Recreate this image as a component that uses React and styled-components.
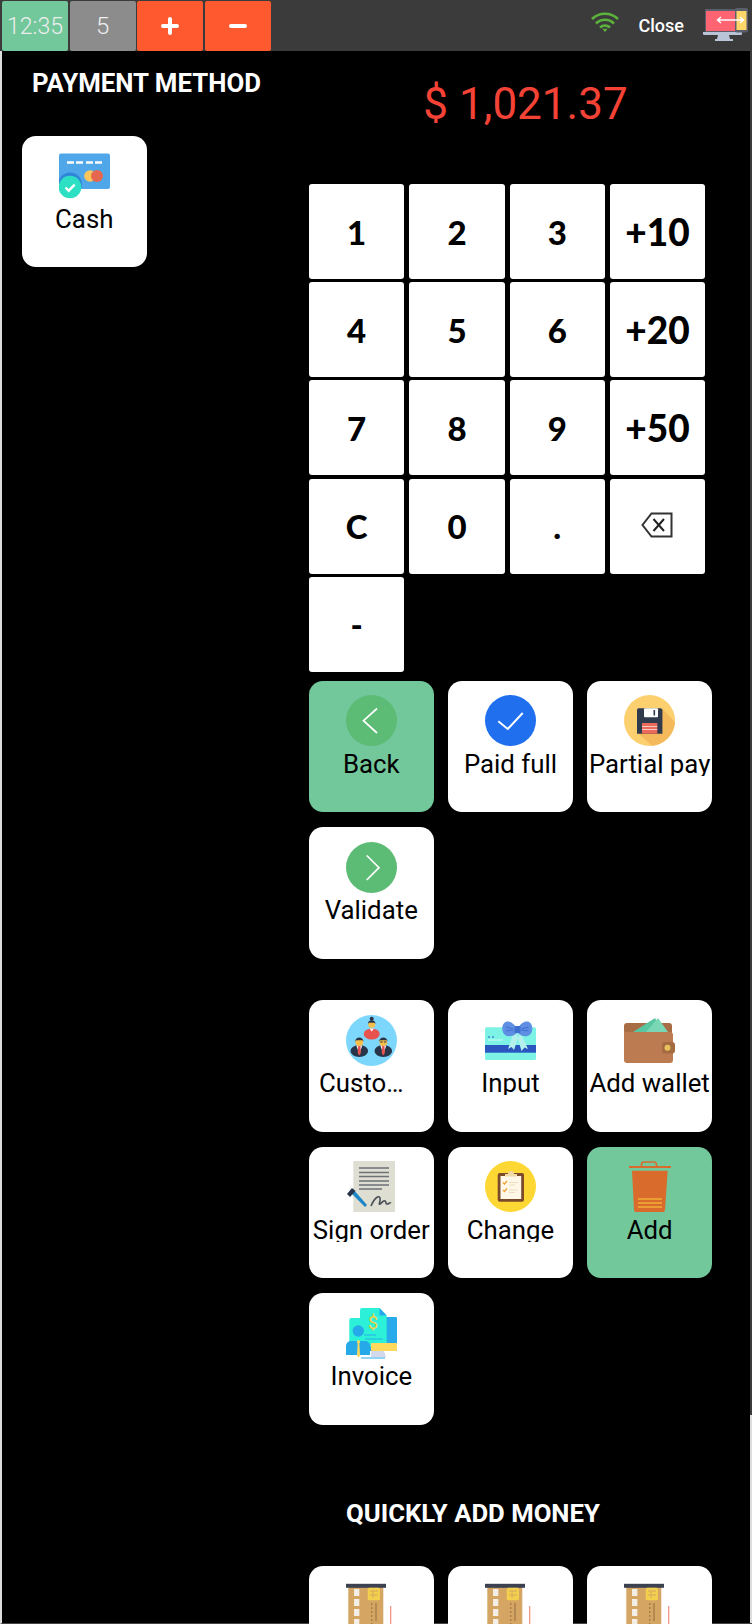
import styled, { createGlobalStyle } from "styled-components";

const GlobalStyle = createGlobalStyle`
  html, body {
    margin: 0;
    padding: 0;
    background: #000;
  }
  body {
    font-family: Roboto, "Liberation Sans", sans-serif;
    overflow: hidden;
  }
`;

const Page = styled.div`
  width: 752px;
  height: 1624px;
  display: flex;
  flex-direction: column;
  overflow: hidden;
  background: #000;
`;

const TopBar = styled.div`
  height: 51px;
  flex: none;
  box-sizing: border-box;
  padding: 1px 4px 0 2px;
  display: flex;
  align-items: stretch;
  gap: 1.7px;
  background: #3b3b3b;
`;

const BarButton = styled.div`
  width: 66px;
  display: flex;
  align-items: center;
  justify-content: center;
  border-radius: 2px;
  color: #eee;
  font-size: ${(p) => p.$size || 24}px;
  font-weight: 300;
  background: ${(p) => p.$bg};
`;

const BarRight = styled.div`
  margin-left: auto;
  display: flex;
  align-items: center;
`;

const CloseText = styled.span`
  margin: -2px 19px 0 20px;
  color: #fff;
  font-size: 18px;
  font-weight: 500;
`;

const Content = styled.div`
  flex: 1;
  min-height: 0;
  display: flex;
  border-left: 2px solid #ddd;
  border-bottom: 1px solid #444;
`;

const LeftColumn = styled.div`
  width: 307px;
  flex: none;
  box-sizing: border-box;
  padding: 17px 0 0 20px;
`;

const RightColumn = styled.div`
  flex: 1;
  min-width: 0;
  display: flex;
  flex-direction: column;
`;

const ScrollTrack = styled.div`
  width: 2px;
  flex: none;
  display: flex;
  flex-direction: column;
  background: #ddd;
`;

const ScrollThumb = styled.div`
  height: 1364px;
  background: #3b3b3b;
`;

const Title = styled.h2`
  margin: 0 0 37.5px 10px;
  color: #fff;
  font-size: 25.8px;
  line-height: 30px;
  font-weight: 700;
`;

const Amount = styled.div`
  height: 133px;
  flex: none;
  box-sizing: border-box;
  padding: 25px 8px 0 0;
  text-align: center;
  color: #f44336;
  font-size: 44px;
  line-height: 56px;
`;

const Keypad = styled.div`
  display: grid;
  grid-template-columns: repeat(4, 95.3px);
  grid-auto-rows: 95px;
  column-gap: 5px;
  row-gap: 3.2px;
`;

const Key = styled.div`
  display: flex;
  align-items: center;
  justify-content: center;
  border-radius: 3px;
  background: #fff;
  color: #000;
  font-family: Lato, "Liberation Sans", sans-serif;
  font-size: ${(p) => (p.$wide ? 37 : 33)}px;
  font-weight: 900;
`;

const CardGrid = styled.div`
  margin-top: ${(p) => p.$top}px;
  display: grid;
  grid-template-columns: repeat(3, 124.5px);
  grid-auto-rows: 131.5px;
  column-gap: 14.7px;
  row-gap: 15px;
`;

const Card = styled.div`
  box-sizing: border-box;
  padding-top: 14.5px;
  display: flex;
  flex-direction: column;
  align-items: center;
  border-radius: 14px;
  overflow: hidden;
  background: ${(p) => (p.$active ? "#72c79b" : "#fff")};
`;

const CashCard = styled(Card)`
  width: 124.5px;
  height: 131.5px;
`;

const CardIcon = styled.svg`
  width: 51px;
  height: 51px;
  flex: none;
  display: block;
`;

const CardLabel = styled.div`
  width: 100%;
  height: 26px;
  margin-top: 3.5px;
  color: #000;
  font-size: 25.8px;
  line-height: 28px;
  text-align: center;
  white-space: nowrap;
  overflow: hidden;
`;

const TruncatedLabel = styled(CardLabel)`
  width: 98px;
  align-self: flex-start;
  margin-left: 10px;
  text-align: left;
  text-overflow: ellipsis;
`;

const QuickTitle = styled(Title)`
  margin: 73.5px 0 38px;
  padding-left: 37px;
  font-size: 25.7px;
  line-height: 30px;
`;

const Circle = ({ fill }) => <circle cx="25.5" cy="25.5" r="25.5" fill={fill} />;

const CashIcon = () => (
  <CardIcon viewBox="0 0 51 51">
    <rect x="0" y="3.5" width="51" height="35.5" rx="2" fill="#4fa6e8" />
    <path d="M8 12.5h7M17 12.5h7M27 12.5h7M36 12.5h7" stroke="#fff" strokeWidth="2.6" />
    <circle cx="31" cy="26" r="5.8" fill="#fbc75d" />
    <circle cx="38" cy="26" r="6" fill="#e5674f" />
    <circle cx="11" cy="34.5" r="12" fill="#2f86d8" />
    <circle cx="11" cy="37" r="11.3" fill="#2ddfc3" />
    <path d="M6.5 37.5l3.2 3.2 6-6" fill="none" stroke="#fff" strokeWidth="2.4" />
  </CardIcon>
);

const BackIcon = () => (
  <CardIcon viewBox="0 0 51 51">
    <Circle fill="#5cbb74" />
    <path d="M31 13.5L17.5 25.7 31 38" fill="none" stroke="#fff" strokeWidth="1.7" />
  </CardIcon>
);

const PaidIcon = () => (
  <CardIcon viewBox="0 0 51 51">
    <Circle fill="#1f6fee" />
    <path d="M13.3 26.3l9.4 7.7 15-16" fill="none" stroke="#fff" strokeWidth="2" />
  </CardIcon>
);

const SaveIcon = () => (
  <CardIcon viewBox="0 0 51 51">
    <Circle fill="#fccf6f" />
    <path d="M38 13.5L49 25 51 28A25.5 25.5 0 0 1 28 50.8L13.5 37.5z" fill="#f4b95a" />
    <path d="M14 13.3h23l1.4 1.4v24h-25.4v-24z" fill="#2f3b4d" />
    <rect x="20" y="13.3" width="14" height="9" rx="1" fill="#fff" />
    <rect x="29.5" y="15" width="1.6" height="5.5" fill="#2f3b4d" />
    <rect x="18" y="28" width="15.3" height="10.7" fill="#ea6a5b" />
    <path d="M18 31.5h15.3M18 34.5h15.3" stroke="#f8c9c0" strokeWidth="1" />
  </CardIcon>
);

const ValidateIcon = () => (
  <CardIcon viewBox="0 0 51 51">
    <Circle fill="#5cbb74" />
    <path d="M20.7 13.5L33 25.7 20.7 38" fill="none" stroke="#fff" strokeWidth="1.7" />
  </CardIcon>
);

const Person = ({ cx, glasses }) => (
  <g>
    <ellipse cx={cx} cy="36" rx="8.8" ry="6" fill="#27344a" />
    <path d={`M${cx - 3} 30.5h6L${cx} 39z`} fill="#f4f4f4" />
    <path d={`M${cx - 1.1} 31h2.2l.5 7-1.6 2.5-1.6-2.5z`} fill="#e9534f" />
    <circle cx={cx} cy="27" r="3.9" fill="#f8c04a" />
    <path d={`M${cx - 4.2} 26.8a4.2 4.2 0 0 1 8.4 0l-1 -1.6h-6.4z`} fill="#27344a" />
    {glasses && (
      <path d={`M${cx - 3} 27h2.4M${cx + 0.6} 27h2.4`} stroke="#27344a" strokeWidth="1.2" />
    )}
  </g>
);

const CustomerIcon = () => (
  <CardIcon viewBox="0 0 51 51">
    <Circle fill="#7dd6fb" />
    <ellipse cx="25.7" cy="19" rx="8" ry="5.5" fill="#e9534f" />
    <path d="M23.5 13.5h4.4l-2.2 3z" fill="#fff" />
    <circle cx="25.7" cy="9.2" r="3.5" fill="#f8c04a" />
    <path d="M22 9a3.7 3.7 0 0 1 7.4 0l-1-1.2h-5.4z" fill="#27344a" />
    <circle cx="25.7" cy="3.8" r="2" fill="#27344a" />
    <Person cx={13.3} />
    <Person cx={37.3} glasses />
  </CardIcon>
);

const GiftIcon = () => (
  <CardIcon viewBox="0 0 51 51">
    <rect x="0" y="12.3" width="51" height="32.7" rx="1.5" fill="#7df3e6" />
    <rect x="0" y="30" width="51" height="7.7" fill="#2b56c0" />
    <path d="M3 22h2M7 22h2" stroke="#2b56c0" strokeWidth="1" />
    <path d="M3 25h15" stroke="#d8fbf7" strokeWidth="1" />
    <path d="M29 17L23 34l3.5-2 2.5 3 5-15zM35 17l8 17-3.500-1.500-3 3.500-5-17z" fill="#b4f0ec" />
    <path d="M32.3 14C26 3 17.3 5 17.3 13.5s8.7 10.5 15 4C39 24 47.3 22 47.3 13.5S38.5 3 32.3 14z" fill="#5f8fe3" />
    <rect x="29.5" y="11" width="6" height="7" rx="1" fill="#3f6fd1" />
    <path d="M21 12l7 2M21 16l7-1M43.500 12l-7 2M43.500 16l-7-1" stroke="#3f6fd1" strokeWidth="1" />
  </CardIcon>
);

const WalletIcon = () => (
  <CardIcon viewBox="0 0 51 51">
    <path d="M0 11a3 3 0 0 1 3-3h42a3 3 0 0 1 3 3v8H0z" fill="#a86d45" />
    <path d="M9 17L31 3l7 14z" fill="#58c6a0" />
    <path d="M22 17L34 3l10 14z" fill="#7ad7b5" />
    <path d="M0 15a2 2 0 0 0 2 2h44a3 3 0 0 1 3 3v25a3 3 0 0 1-3 3H3a3 3 0 0 1-3-3z" fill="#bd7b51" />
    <rect x="38" y="27" width="13" height="11.5" rx="3" fill="#a46a40" />
    <circle cx="43.5" cy="32.7" r="3" fill="#e8c25c" />
  </CardIcon>
);

const SignIcon = () => (
  <CardIcon viewBox="0 0 51 51">
    <rect x="7.3" y="0" width="41.7" height="51" fill="#dedfd2" />
    <path d="M13 7h30M13 11.5h30M13 15.5h30M13 20h30M13 24h30M13 28h23" stroke="#6d7278" strokeWidth="1.5" />
    <path d="M4 31l3-3 14 16-2 2z" fill="#1c86c9" />
    <path d="M1 33l5-6 3.500 3-5.500 6z" fill="#27344a" />
    <path d="M25 45c4-9 8-11 9-8s-2 7 0 6 3-4 5-3 0 3 2 3 3-2 4-1" fill="none" stroke="#4b5058" strokeWidth="1.6" />
  </CardIcon>
);

const ClipboardIcon = () => (
  <CardIcon viewBox="0 0 51 51">
    <Circle fill="#fdd835" />
    <rect x="12.7" y="12" width="26.3" height="28.7" rx="2" fill="#7a4a2a" />
    <rect x="15.5" y="15" width="20.7" height="23" fill="#fff8e8" />
    <path d="M20 15v-2h3a3 3 0 0 1 6 0h3v2.5H20z" fill="#f2d9a8" />
    <path d="M18 21.500l1.500 1.500 2.500-3M18 29l1.500 1.500 2.500-3" fill="none" stroke="#f0a030" strokeWidth="1.2" />
    <path d="M24 21.500h9M24 24h6M24 29h9M24 31.500h6" stroke="#ecdcc0" strokeWidth="1" />
  </CardIcon>
);

const TrashIcon = () => (
  <CardIcon viewBox="0 0 51 51">
    <path d="M5 6h42" stroke="#d96b2c" strokeWidth="1.8" />
    <path d="M17.500 5.500v-2a2.500 2.500 0 0 1 2.500-2.500h10a2.500 2.500 0 0 1 2.500 2.500v2" fill="none" stroke="#d96b2c" strokeWidth="1.6" />
    <path d="M8 9.700h35.700L41 49a2 2 0 0 1-2 2H12a2 2 0 0 1-2-2z" fill="#d96b2c" />
    <path d="M14 38h24M14 42h24M14 46h24" stroke="#f2b035" strokeWidth="1.4" />
  </CardIcon>
);

const InvoiceIcon = () => (
  <CardIcon viewBox="0 0 51 51">
    <rect x="21" y="9" width="30" height="34" rx="1" fill="#27aae9" />
    <path d="M14 10V2a2 2 0 0 1 2-2h17.500l7.200 7.500V38.700H3.300V12a2 2 0 0 1 2-2z" fill="#2cf0d8" />
    <path d="M33.500 0l7.200 7.500h-7.200z" fill="#27aae9" />
    <rect x="25" y="35" width="26" height="8" rx="1" fill="#ffd95c" />
    <path d="M25 43h13l2 6H25z" fill="#d3d9ea" />
    <path d="M15 50h24" stroke="#27aae9" strokeWidth="1.2" />
    <text x="27" y="21" fontSize="18" textAnchor="middle" fill="#f2d24a" fontFamily="Roboto, sans-serif">$</text>
    <path d="M18 27h12M19 31h18" stroke="#27aae9" strokeWidth="0.9" />
    <circle cx="12.300" cy="23" r="5.700" fill="#26a9e8" />
    <path d="M0 47V38a5 5 0 0 1 5-5h14a5 5 0 0 1 5 5v9z" fill="#26a9e8" />
    <path d="M11 32.500h3v2l-.7 1 .7 12-1.500 2-1.500-2 .7-12-.7-1z" fill="#ffd95c" />
  </CardIcon>
);

const AtmIcon = () => (
  <CardIcon viewBox="0 0 51 51">
    <rect x="2.300" y="5" width="35" height="46" fill="#d4a563" />
    <rect x="0" y="2.800" width="40" height="4" fill="#3b4150" />
    <path d="M10.700 8v7M10.700 18v7M10.700 28v7M10.700 38v7" stroke="#f3efe6" strokeWidth="5.300" />
    <rect x="21.700" y="6.800" width="12.300" height="12.500" rx="1.500" fill="#f3cf4e" />
    <path d="M24 10h8M27 10v7M24 14h3M27 14h5" stroke="#d4a563" strokeWidth="0.9" />
    <path d="M25.700 22v24" stroke="#a67f48" strokeWidth="1.400" strokeDasharray="2 2" />
    <path d="M30 22v18" stroke="#a67f48" strokeWidth="1.400" />
    <path d="M44.700 25v20M39 44.500l2 1M49 44.500l2 1" stroke="#f28b82" strokeWidth="1.200" />
  </CardIcon>
);

const WifiIcon = () => (
  <svg width="28" height="20" viewBox="0 0 28 20" style={{ display: "block", marginTop: "-8px" }}>
    <g fill="none" stroke="#5bb33c" strokeWidth="2.600">
      <path d="M1 7C8 0 20 0 27 7" />
      <path d="M5 11.500C10 6.500 18 6.500 23 11.500" />
      <path d="M9 15.500C12 13 16 13 19 15.500" />
    </g>
    <path d="M14 20l-2.600-3.200h5.200z" fill="#5bb33c" />
  </svg>
);

const ResponsiveIcon = () => (
  <svg width="45" height="34" viewBox="0 0 45 34" style={{ display: "block", marginTop: "-2px" }}>
    <rect x="2" y="1" width="33" height="24" fill="#5a5f6b" />
    <rect x="3" y="3" width="31" height="20" fill="#ff6473" />
    <path d="M0 24h39v2a1 1 0 0 1-1 1H1a1 1 0 0 1-1-1z" fill="#b9c4d8" />
    <path d="M15 27h11l1 4h3v2H12v-2h2z" fill="#b9c4d8" />
    <rect x="32" y="0" width="13" height="24.500" rx="2" fill="#5a5f6b" />
    <rect x="33.500" y="3" width="10" height="19" fill="#ffd768" />
    <path d="M15 12h25M18 9l-3.500 3 3.500 3M37 9l3.500 3-3.500 3" fill="none" stroke="#fff" strokeWidth="1.400" />
  </svg>
);

const BackspaceIcon = () => (
  <svg width="32" height="26" viewBox="0 0 32 26" style={{ display: "block", margin: "-2px 0 0 -1px" }}>
    <path d="M30.500 1.500H10.500L1.500 13l9 11.500h20z" fill="none" stroke="#333" strokeWidth="2" />
    <path d="M12.500 7l10.500 12M23 7L12.500 19" stroke="#222" strokeWidth="2" />
  </svg>
);

const PlusIcon = () => (
  <svg width="18" height="18" viewBox="0 0 18 18" style={{ display: "block" }}>
    <path d="M2 9h14M9 2v14" stroke="#fff" strokeWidth="4" strokeLinecap="round" />
  </svg>
);

const MinusIcon = () => (
  <svg width="18" height="18" viewBox="0 0 18 18" style={{ display: "block" }}>
    <path d="M2 9h14" stroke="#fff" strokeWidth="4" strokeLinecap="round" />
  </svg>
);

const keys = ["1", "2", "3", "+10", "4", "5", "6", "+20", "7", "8", "9", "+50", "C", "0", ".", "back", "-"];

const App = () => {
  return (
    <Page>
      <GlobalStyle />
      <TopBar>
        <BarButton $bg="#72c79b" $size={23}>12:35</BarButton>
        <BarButton $bg="#8c8c8c">5</BarButton>
        <BarButton $bg="#ff5a2f"><PlusIcon /></BarButton>
        <BarButton $bg="#ff5a2f"><MinusIcon /></BarButton>
        <BarRight>
          <WifiIcon />
          <CloseText>Close</CloseText>
          <ResponsiveIcon />
        </BarRight>
      </TopBar>
      <Content>
        <LeftColumn>
          <Title>PAYMENT METHOD</Title>
          <CashCard>
            <CashIcon />
            <CardLabel>Cash</CardLabel>
          </CashCard>
        </LeftColumn>
        <RightColumn>
          <Amount>$ 1,021.37</Amount>
          <Keypad>
            {keys.map((k) => (
              <Key key={k} $wide={k.startsWith("+")}>{k === "back" ? <BackspaceIcon /> : k}</Key>
            ))}
          </Keypad>
          <CardGrid $top={9}>
            <Card $active><BackIcon /><CardLabel>Back</CardLabel></Card>
            <Card><PaidIcon /><CardLabel>Paid full</CardLabel></Card>
            <Card><SaveIcon /><CardLabel>Partial pay</CardLabel></Card>
            <Card><ValidateIcon /><CardLabel>Validate</CardLabel></Card>
          </CardGrid>
          <CardGrid $top={41.5}>
            <Card><CustomerIcon /><TruncatedLabel>Customers</TruncatedLabel></Card>
            <Card><GiftIcon /><CardLabel>Input</CardLabel></Card>
            <Card><WalletIcon /><CardLabel>Add wallet</CardLabel></Card>
            <Card><SignIcon /><CardLabel>Sign order</CardLabel></Card>
            <Card><ClipboardIcon /><CardLabel>Change</CardLabel></Card>
            <Card $active><TrashIcon /><CardLabel>Add</CardLabel></Card>
            <Card><InvoiceIcon /><CardLabel>Invoice</CardLabel></Card>
          </CardGrid>
          <QuickTitle>QUICKLY ADD MONEY</QuickTitle>
          <CardGrid $top={0}>
            <Card><AtmIcon /></Card>
            <Card><AtmIcon /></Card>
            <Card><AtmIcon /></Card>
          </CardGrid>
        </RightColumn>
        <ScrollTrack>
          <ScrollThumb />
        </ScrollTrack>
      </Content>
    </Page>
  );
};

export default App;
